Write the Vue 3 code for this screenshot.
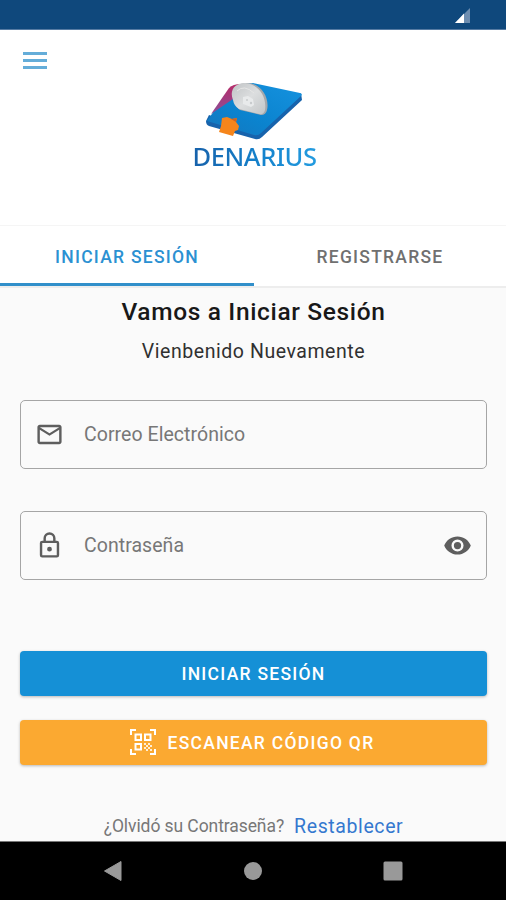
<script setup>
import { ref } from 'vue'

const tabs = ['INICIAR SESIÓN', 'REGISTRARSE']
const active = ref(0)
</script>

<template>
  <div class="screen">
    <div class="status">
      <svg class="signal" viewBox="0 0 15 15">
        <path d="M15 0V15H0Z" fill="#6d8db0" />
        <path d="M9 5.5V15H0Z" fill="#fff" />
      </svg>
    </div>

    <header class="header">
      <button class="menu" aria-label="Menú"><i></i><i></i><i></i></button>
      <div class="brand">
        <svg class="mark" viewBox="0 0 100 62">
          <defs>
            <linearGradient id="card" x1="0" y1="1" x2="1" y2="0">
              <stop offset="0" stop-color="#1576bd" />
              <stop offset=".4" stop-color="#0b83ce" />
              <stop offset="1" stop-color="#1592df" />
            </linearGradient>
            <linearGradient id="coin" x1="0" y1="0" x2="1" y2="1">
              <stop offset="0" stop-color="#c0c3c5" />
              <stop offset=".5" stop-color="#dcdedf" />
              <stop offset="1" stop-color="#c3c6c8" />
            </linearGradient>
            <linearGradient id="side" x1="0" y1="0" x2="0" y2="1">
              <stop offset="0" stop-color="#b82b68" />
              <stop offset="1" stop-color="#8c4f97" />
            </linearGradient>
          </defs>
          <path d="M1 38L4 32 50 49 96 10 97 17 57 54Q54 57 50 56L4 43Q1 42 1 38Z" fill="#1763ac" />
          <path d="M48 0L95 10Q98 11 96 13L56 50Q53 53 49 52L2 38 25 5Q28 2 33 2Z" fill="url(#card)" />
          <path d="M6 31L24 5Q28 1 36 1L28 16Z" fill="url(#side)" />
          <path d="M30 19C26 8 31 0 42 0C56 0 65 15 62 27Q61 32 56 32L35 27Q31 24 30 19Z" fill="#a4a8ac" />
          <path d="M28 17C24 7 30 0 40 0C54 1 62 14 60 27Q59 32 54 31L34 26Q29 23 28 17Z" fill="url(#coin)" />
          <path d="M32 8Q39 1 49 10" fill="none" stroke="#e6e6e6" stroke-width="1" />
          <path d="M38 14L43 13 48 16 49 22 46 24 38 21Z" fill="#e8eaeb" />
          <circle cx="42" cy="17" r="1" fill="#c8cbcd" />
          <circle cx="46" cy="20" r="1.200" fill="#c8cbcd" />
          <path d="M17 35L22 34 27 36 32 35 31 39 34 43 33 47 30 48 28 53 14 49 16 43Z" fill="#f5851b" />
          <path d="M26 36L32 35 31 39Z" fill="#c86327" />
        </svg>
        <div class="wordmark">DENARIUS</div>
      </div>
    </header>

    <nav class="tabs">
      <button
        v-for="(tab, i) in tabs"
        :key="tab"
        class="tab"
        :class="{ active: active === i }"
        @click="active = i"
      ><span>{{ tab }}</span></button>
    </nav>

    <main class="content">
      <h1><span>Vamos a Iniciar Sesión</span></h1>
      <h2><span>Vienbenido Nuevamente</span></h2>

      <div class="field">
        <svg class="icon" viewBox="0 0 24 24">
          <path d="M22 6c0-1.100-.9-2-2-2H4c-1.100 0-2 .9-2 2v12c0 1.100.9 2 2 2h16c1.100 0 2-.9 2-2V6zm-2 0-8 5-8-5h16zm0 12H4V8l8 5 8-5v10z" />
        </svg>
        <span class="label">Correo Electrónico</span>
      </div>

      <div class="field">
        <svg class="icon" viewBox="0 0 24 24">
          <path d="M18 8h-1V6A5 5 0 0 0 7 6v2H6a2 2 0 0 0-2 2v10a2 2 0 0 0 2 2h12a2 2 0 0 0 2-2V10a2 2 0 0 0-2-2zM9 6a3 3 0 0 1 6 0v2H9V6zm9 14H6V10h12v10zm-6-3a2 2 0 1 0 0-4 2 2 0 0 0 0 4z" />
        </svg>
        <span class="label">Contraseña</span>
        <svg class="icon eye" viewBox="0 0 24 24">
          <path d="M12 4.500C7 4.500 2.730 7.610 1 12c1.730 4.390 6 7.500 11 7.500s9.270-3.110 11-7.500c-1.730-4.390-6-7.500-11-7.500zM12 17a5 5 0 1 1 0-10 5 5 0 0 1 0 10zm0-8a3 3 0 1 0 0 6 3 3 0 0 0 0-6z" />
        </svg>
      </div>

      <button class="action login"><span>INICIAR SESIÓN</span></button>
      <button class="action scan">
        <svg class="qr" viewBox="0 0 26 26">
          <path d="M1 6V1H6M20 1H25V6M25 20V25H20M6 25H1V20" fill="none" stroke="currentColor" stroke-width="2" />
          <path d="M5.500 5.500H11V11H5.500ZM15 5.500H20.500V11H15ZM5.500 15H11V20.500H5.500Z" fill="none" stroke="currentColor" stroke-width="2" />
          <path d="M14 14h2v2h-2zM18 14h2v2h-2zM16 16h2v2h-2zM20 16h2v2h-2zM14 18h2v2h-2zM18 18h2v2h-2zM16 20h2v2h-2zM20 20h2v2h-2z" fill="currentColor" fill-opacity=".8" />
        </svg>
        <span>ESCANEAR CÓDIGO QR</span>
      </button>

      <p class="recover"><span class="question">¿Olvidó su Contraseña?</span><a>Restablecer</a></p>
    </main>

    <footer class="system">
      <svg viewBox="0 0 20 22"><path d="M18 1.500V20.500L1.500 11Z" stroke="#999" stroke-linejoin="round" /></svg>
      <svg viewBox="0 0 20 22"><circle cx="10" cy="11" r="9" /></svg>
      <svg viewBox="0 0 20 22"><rect x=".5" y="1.500" width="19" height="19" rx="1.500" /></svg>
    </footer>
  </div>
</template>

<style>
body { margin: 0; }
</style>

<style scoped>
* { box-sizing: border-box; }
.screen {
  width: 506px;
  height: 900px;
  display: flex;
  flex-direction: column;
  overflow: hidden;
  background: #fafafa;
  font-family: Roboto, "Liberation Sans", sans-serif;
}
button { padding: 0; border: 0; background: none; font-family: inherit; }
.status {
  height: 30px;
  flex: none;
  display: flex;
  justify-content: flex-end;
  padding: 8px 36px 0 0;
  background: #0f487c;
  border-bottom: 1px solid #567ba3;
}
.signal { width: 15px; height: 15px; }
.header {
  height: 195px;
  flex: none;
  display: grid;
  grid-template-columns: 24px 1fr 21px;
  padding: 22px 23px 0;
  background: #fff;
}
.menu { display: flex; flex-direction: column; gap: 4px; height: 17px; width: 24px; }
.menu i { width: 24px; height: 3px; background: #64add9; }
.brand { display: flex; flex-direction: column; align-items: center; padding-top: 31px; }
.mark { width: 100px; height: 62px; }
.wordmark {
  margin-top: -4px;
  font: 500 25.500px/30px "Noto Sans", "Open Sans", sans-serif;
  letter-spacing: -.4px;
  color: transparent;
  background: linear-gradient(90deg, #1761aa, #1482cc 55%, #249ce0);
  background-clip: text;
}
.tabs {
  height: 63px;
  flex: none;
  display: grid;
  grid-template-columns: 254px 1fr;
  background: #fff;
  border-top: 1px solid #f5f5f5;
  border-bottom: 2px solid #ededed;
}
.tab {
  height: 60px;
  padding-top: 4px;
  font-size: 17.500px;
  font-weight: 500;
  letter-spacing: 1.250px;
  color: #707070;
  border-bottom: 3px solid transparent;
}
.tab.active { color: #2b91d2; border-color: #318fca; }
.content { flex: 1; display: flex; flex-direction: column; padding: 9px 19px 0 20px; }
h1, h2 { margin: 0; text-align: center; color: #181818; }
h1 { font-size: 24.500px; line-height: 30px; font-weight: 500; letter-spacing: .65px; }
h2 { margin-top: 11px; font-size: 19.500px; line-height: 28px; font-weight: 400; letter-spacing: .55px; color: #303030; }
.field {
  height: 69px;
  flex: none;
  display: flex;
  align-items: center;
  padding: 0 14px 0 14px;
  border: 1px solid #a5a5a5;
  border-radius: 5px;
}
h2 + .field { margin: 34px 0 42px; }
.icon { width: 29px; height: 29px; margin-bottom: 1px; fill: #5e5e5e; }
.label { margin-left: 20px; font-size: 19.500px; font-weight: 400; letter-spacing: .05px; color: #777; }
.eye { margin-left: auto; }
.action {
  height: 45px;
  flex: none;
  display: flex;
  align-items: center;
  justify-content: center;
  border-radius: 4px;
  font-size: 17.500px;
  font-weight: 500;
  letter-spacing: 1.270px;
  color: #fff;
  box-shadow: 0 1px 3px #0004;
}
.login { margin-top: 71px; background: #1590d6; }
.scan { margin-top: 24px; gap: 12px; padding-right: 3px; background: #fba931; }
.qr { width: 26px; height: 26px; margin-bottom: 1px; }
.recover { display: flex; align-items: center; justify-content: center; gap: 10px; margin: 47px 0 0; line-height: 29px; }
.question { font-size: 17.500px; letter-spacing: -.08px; color: #777; }
.recover a { font-size: 19.500px; letter-spacing: .6px; color: #3478cf; }
.system {
  height: 59px;
  flex: none;
  display: flex;
  justify-content: space-between;
  padding: 18px 103px 0;
  background: #000;
  border-top: 1px solid #777;
}
.system svg { width: 20px; height: 22px; fill: #999; }
</style>
